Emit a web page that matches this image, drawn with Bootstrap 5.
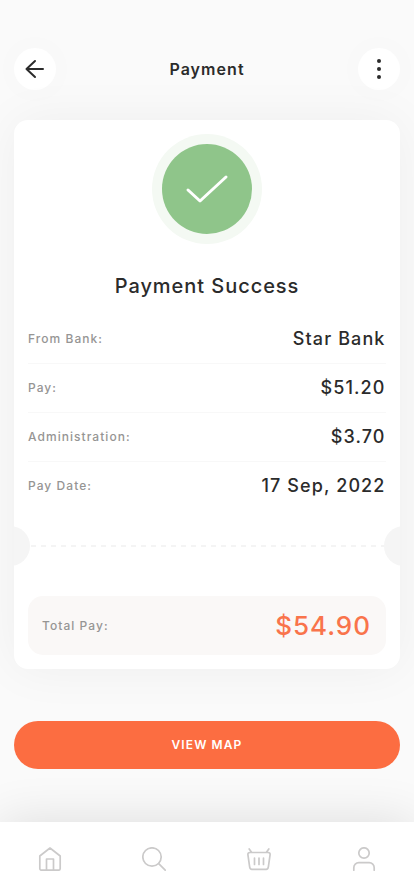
<!DOCTYPE html>
<html lang="en">
<head>
<meta charset="utf-8">
<meta name="viewport" content="width=device-width, initial-scale=1">
<title>Payment</title>
<link href="https://cdn.jsdelivr.net/npm/bootstrap@5.3.0/dist/css/bootstrap.min.css" rel="stylesheet">
<style>
  body { font-family: Inter, "Liberation Sans", sans-serif; background: #fafafa; color: #2b2b2b; letter-spacing: 1px; }
  .screen { height: 896px; overflow: hidden; }
  .page-head { padding: 48px 14px 0; }
  .page-title { font-size: 16px; font-weight: 600; line-height: 24px; letter-spacing: 1.05px; }
  .round-btn { width: 42px; height: 42px; background: #fff; color: #2b2b2b; box-shadow: 0 0 44px rgba(0,0,0,.022); }
  .receipt { margin: 30px 14px 0; height: 549px; border-radius: 14px; background: #fff; box-shadow: 0 0 50px rgba(0,0,0,.05); }
  .status-ring { width: 110px; height: 110px; margin: 14px 0 0 138px; background: #f4f9f3; }
  .status-disc { width: 90px; height: 90px; background: #8fc58a; }
  .status-title { margin: 26px 0 0; font-size: 20px; font-weight: 500; line-height: 32px; letter-spacing: .95px; }
  .details { margin: 13px 14px 0; }
  .detail { height: 49px; border-bottom: 1px solid #f8f8f8; }
  .detail:last-child { border-bottom-color: transparent; }
  .caption { font-size: 12px; font-weight: 500; color: #969594; line-height: 18px; letter-spacing: 1.05px; }
  .amount { font-size: 18px; font-weight: 500; line-height: 26px; letter-spacing: 1.1px; margin-right: .5px; }
  .tear { height: 40px; margin-top: 15px; overflow: hidden; }
  .notch { width: 40px; height: 40px; background: #f5f5f5; }
  .notch-start { margin-left: -24px; }
  .notch-end { margin-right: -24px; }
  .dashes { height: 2px; background: repeating-linear-gradient(90deg, #f4f4f4 0 5px, transparent 5px 10px); margin-left: 1px; }
  .total { margin: 30px 14px 0; height: 59px; padding: 0 14px; border-radius: 15px; background: #faf8f7; }
  .total-sum { font-size: 26px; font-weight: 500; color: #f9744b; line-height: 36px; margin-right: 1px; }
  .map-btn { margin: 52px 14px 0; height: 48px; background: #fc6d41; color: #fff; font-size: 12px; font-weight: 600; letter-spacing: 1.1px; }
  .map-btn:hover { background: #ee6138; color: #fff; }
  .tabs { height: 74px; padding: 0 38px; background: #fff; box-shadow: 0 0 50px rgba(0,0,0,.12); }
  .tabs a { color: #cbcaca; width: 24px; height: 24px; }
  .tabs a:nth-child(2) { margin-left: -1px; margin-right: 1px; }
  svg { display: block; fill: none; stroke: currentColor; stroke-width: 1.7; stroke-linecap: round; stroke-linejoin: round; }
</style>
</head>
<body>
<div class="screen d-flex flex-column">
  <header class="page-head d-flex align-items-center justify-content-between">
    <a href="#" class="round-btn rounded-circle d-flex align-items-center justify-content-center" aria-label="Back">
      <svg width="24" height="24" viewBox="0 0 24 24"><path stroke-width="2" d="M20 12H3.500M12 4 3.500 12l8.500 8"/></svg>
    </a>
    <h1 class="page-title mb-0">Payment</h1>
    <a href="#" class="round-btn rounded-circle d-flex align-items-center justify-content-center" aria-label="More">
      <svg width="24" height="24" viewBox="0 0 24 24"><g fill="currentColor" stroke="none"><circle cx="12" cy="4" r="2"/><circle cx="12" cy="12" r="2"/><circle cx="12" cy="20" r="2"/></g></svg>
    </a>
  </header>

  <main>
    <section class="receipt d-flex flex-column">
      <div class="status-ring rounded-circle d-flex align-items-center justify-content-center flex-shrink-0">
        <div class="status-disc rounded-circle d-flex align-items-center justify-content-center text-white">
          <svg width="44" height="30" viewBox="0 0 44 30"><path stroke-width="3" d="M3 16 15 27 41 3"/></svg>
        </div>
      </div>
      <h2 class="status-title text-center">Payment Success</h2>
      <div class="details">
        <div class="detail d-flex align-items-center justify-content-between"><span class="caption">From Bank:</span><span class="amount">Star Bank</span></div>
        <div class="detail d-flex align-items-center justify-content-between"><span class="caption">Pay:</span><span class="amount">$51.20</span></div>
        <div class="detail d-flex align-items-center justify-content-between"><span class="caption">Administration:</span><span class="amount">$3.70</span></div>
        <div class="detail d-flex align-items-center justify-content-between"><span class="caption">Pay Date:</span><span class="amount">17 Sep, 2022</span></div>
      </div>
      <div class="tear d-flex align-items-center flex-shrink-0">
        <div class="notch notch-start rounded-circle flex-shrink-0"></div>
        <div class="dashes flex-grow-1"></div>
        <div class="notch notch-end rounded-circle flex-shrink-0"></div>
      </div>
      <div class="total d-flex align-items-center justify-content-between"><span class="caption">Total Pay:</span><span class="total-sum">$54.90</span></div>
    </section>
    <div class="d-grid"><button type="button" class="map-btn btn rounded-pill border-0">VIEW MAP</button></div>
  </main>

  <nav class="tabs d-flex align-items-center justify-content-between mt-auto flex-shrink-0">
    <a href="#" aria-label="Home"><svg width="24" height="24" viewBox="0 0 24 24"><path d="M1.800 9 12 1l10.200 8v12.500a1.700 1.700 0 0 1-1.700 1.700h-17a1.700 1.700 0 0 1-1.700-1.700zM8.500 23V12h7v11"/></svg></a>
    <a href="#" aria-label="Search"><svg width="24" height="24" viewBox="0 0 24 24"><circle cx="10" cy="10" r="9.200"/><path d="m16.700 16.700 6.500 6.500"/></svg></a>
    <a href="#" aria-label="Basket"><svg width="24" height="24" viewBox="0 0 24 24"><path d="M2.800 5.500h18.400c1.300 0 2 .9 1.900 2.200l-1.700 12c-.2 1.700-1 2.600-2.200 2.600H4.800c-1.200 0-2-.9-2.200-2.600L.9 7.700C.8 6.400 1.500 5.500 2.800 5.500zM2.200 2l2.200 3M21.800 2l-2.200 3M7.500 11v6.500M12 11v6.500M16.500 11v6.500"/></svg></a>
    <a href="#" aria-label="Profile"><svg width="24" height="24" viewBox="0 0 24 24"><circle cx="12" cy="6" r="5.200"/><path d="M1.800 23.200v-2.500a5 5 0 0 1 5-5h10.400a5 5 0 0 1 5 5v2.500"/></svg></a>
  </nav>
</div>
<script src="https://cdn.jsdelivr.net/npm/bootstrap@5.3.0/dist/js/bootstrap.bundle.min.js"></script>
</body>
</html>
